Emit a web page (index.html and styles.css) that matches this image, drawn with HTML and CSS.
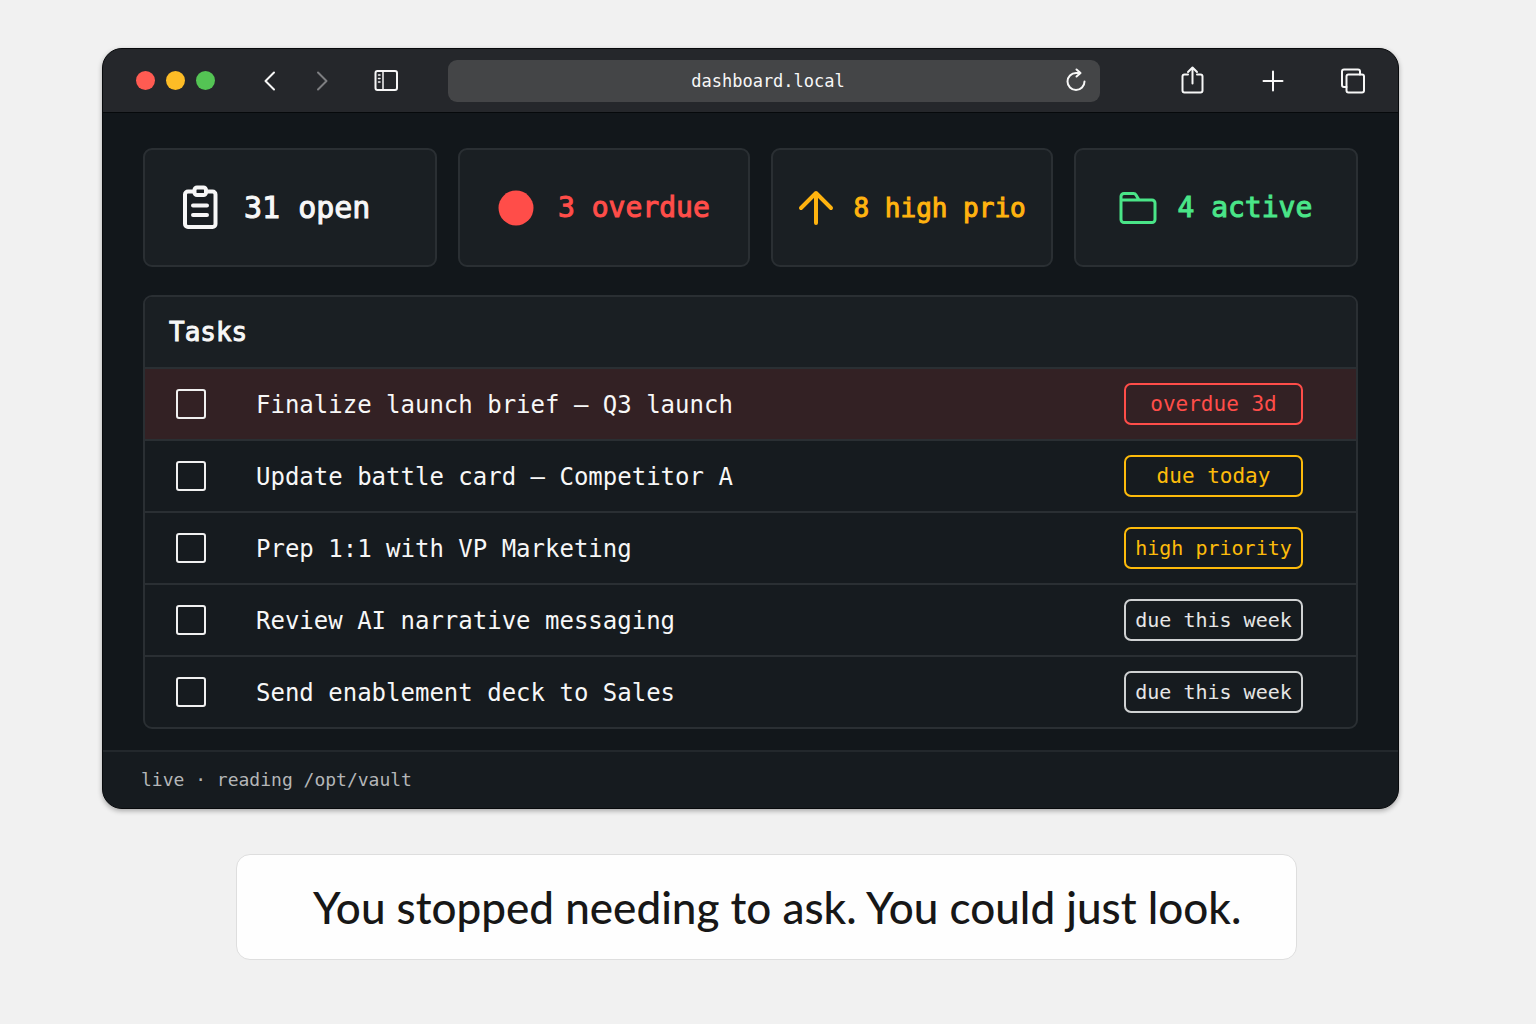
FILE: index.html
```html
<!DOCTYPE html>
<html lang="en">
<head>
    <meta charset="UTF-8">
    <title>Dashboard</title>
    <link rel="stylesheet" href="styles.css">
</head>
<body>
    <main class="window">
        <header class="titlebar">
            <div class="lights">
                <span class="light red"></span>
                <span class="light yellow"></span>
                <span class="light green"></span>
            </div>
            <nav class="nav-buttons">
                <button type="button" aria-label="Back">
                    <svg width="32" height="32" viewBox="0 0 32 32"><path d="M20 7.500L11.500 16L20 24.500"/></svg>
                </button>
                <button type="button" class="dim" aria-label="Forward">
                    <svg width="32" height="32" viewBox="0 0 32 32"><path d="M12 7.500L20.500 16L12 24.500"/></svg>
                </button>
            </nav>
            <button type="button" class="sidebar-button" aria-label="Sidebar">
                <svg width="32" height="32" viewBox="0 0 32 32"><rect x="5.500" y="6" width="21.500" height="19" rx="2"/><path d="M13 6v19M8.500 10h1.500M8.500 13.500h1.500M8.500 17h1.500" stroke-width="1.500"/></svg>
            </button>
            <div class="address">
                <input type="text" value="dashboard.local" aria-label="Address">
                <button type="button" aria-label="Reload">
                    <svg width="32" height="32" viewBox="0 0 32 32"><path d="M23.500 16.500a8.500 8.500 0 1 1-8.500-8.500h4M15.500 4.500L19.500 8L15.500 11.500"/></svg>
                </button>
            </div>
            <div class="actions">
                <button type="button" aria-label="Share">
                    <svg width="32" height="32" viewBox="0 0 32 32"><path d="M11 9.500H7.500a2 2 0 0 0-2 2V25.500a2 2 0 0 0 2 2h16a2 2 0 0 0 2-2V11.500a2 2 0 0 0-2-2H20M15.500 18.500V3M11 7L15.500 2.500L20 7"/></svg>
                </button>
                <button type="button" aria-label="New tab">
                    <svg width="32" height="32" viewBox="0 0 32 32"><path d="M16 6.500v19M6.500 16h19"/></svg>
                </button>
                <button type="button" aria-label="Show tabs">
                    <svg width="32" height="32" viewBox="0 0 32 32"><rect x="9.500" y="9.500" width="17.500" height="18" rx="2"/><path d="M9.500 22H7a2 2 0 0 1-2-2V6.500a2 2 0 0 1 2-2h14a2 2 0 0 1 2 2v3"/></svg>
                </button>
            </div>
        </header>

        <section class="content">
            <div class="stats">
                <div class="stat open">
                    <svg width="36" height="46" viewBox="0 0 36 46"><rect x="3" y="6.500" width="30.500" height="35.500" rx="3"/><rect x="12.500" y="2.500" width="11.500" height="7.500" rx="2.500" fill="#1a1f23"/><path d="M11 20.500h14M11 30h14"/></svg>
                    <span>31 open</span>
                </div>
                <div class="stat overdue">
                    <svg width="36" height="36" viewBox="0 0 36 36"><circle cx="18" cy="18" r="17.500" fill="currentColor" stroke="none"/></svg>
                    <span>3 overdue</span>
                </div>
                <div class="stat high">
                    <svg width="36" height="36" viewBox="0 0 36 36"><path d="M18 33V3M3 18L18 3L33 18"/></svg>
                    <span>8 high prio</span>
                </div>
                <div class="stat active">
                    <svg width="38" height="36" viewBox="0 0 38 36"><path d="M2 29.500V6.500a3 3 0 0 1 3-3h9.500a3 3 0 0 1 2.500 1.500L20 10h13a3 3 0 0 1 3 3v16.500a3 3 0 0 1-3 3H5a3 3 0 0 1-3-3zM2 10h18"/></svg>
                    <span>4 active</span>
                </div>
            </div>

            <div class="tasks">
                <h2>Tasks</h2>
                <ul>
                    <li class="late">
                        <input type="checkbox" id="task1">
                        <label for="task1">Finalize launch brief — Q3 launch</label>
                        <span class="badge red">overdue 3d</span>
                    </li>
                    <li>
                        <input type="checkbox" id="task2">
                        <label for="task2">Update battle card — Competitor A</label>
                        <span class="badge yellow">due today</span>
                    </li>
                    <li>
                        <input type="checkbox" id="task3">
                        <label for="task3">Prep 1:1 with VP Marketing</label>
                        <span class="badge yellow long">high priority</span>
                    </li>
                    <li>
                        <input type="checkbox" id="task4">
                        <label for="task4">Review AI narrative messaging</label>
                        <span class="badge long">due this week</span>
                    </li>
                    <li>
                        <input type="checkbox" id="task5">
                        <label for="task5">Send enablement deck to Sales</label>
                        <span class="badge long">due this week</span>
                    </li>
                </ul>
            </div>
        </section>

        <footer class="status">live · reading /opt/vault</footer>
    </main>

    <p class="caption">You stopped needing to ask. You could just look.</p>
</body>
</html>
```
FILE: styles.css
```css
* {
    box-sizing: border-box;
}

body {
    margin: 0;
    padding: 48px 137px 64px 102px;
    background-color: #f1f1f1;
    font-family: "DejaVu Sans Mono", monospace;
    color: #f7f7f7;
}

svg {
    display: block;
    flex: none;
    fill: none;
    stroke: currentColor;
    stroke-width: 2;
    stroke-linecap: round;
    stroke-linejoin: round;
}

button {
    padding: 0;
    border: none;
    background: none;
    color: #f7f7f7;
    cursor: pointer;
}

/* Browser window */
.window {
    border: 1px solid #080a0c;
    border-radius: 20px;
    background-color: #12171b;
    overflow: hidden;
    box-shadow: 0 2px 5px rgba(0, 0, 0, 0.3);
}

.titlebar {
    display: flex;
    align-items: center;
    height: 64px;
    padding: 0 29px 0 33px;
    background-color: #25272b;
    border-bottom: 1px solid #06090b;
}

.lights {
    display: flex;
    gap: 11px;
}

.light {
    width: 19px;
    height: 19px;
    border-radius: 50%;
}

.light.red {
    background-color: #ff5b52;
}

.light.yellow {
    background-color: #fdbc26;
}

.light.green {
    background-color: #54c454;
}

.nav-buttons {
    display: flex;
    gap: 20px;
    margin-left: 39px;
}

.dim {
    color: #7d7e81;
}

.sidebar-button {
    margin-left: 32px;
}

.address {
    display: flex;
    flex: 1;
    align-items: center;
    height: 42px;
    margin: 0 77px 0 46px;
    padding: 0 7px 0 27px;
    border-radius: 9px;
    background-color: #444547;
}

.address input {
    flex: 1;
    min-width: 0;
    border: none;
    background: none;
    color: #f7f7f7;
    font-family: inherit;
    font-size: 17px;
    text-align: center;
}

.actions {
    display: flex;
    gap: 48px;
}

.content {
    padding: 35px 40px 21px;
}

/* Stat cards */
.stats {
    display: grid;
    grid-template-columns: 294fr 291fr 282fr 284fr;
    gap: 21px;
    margin-bottom: 28px;
}

.stat {
    display: flex;
    align-items: center;
    justify-content: center;
    gap: 24px;
    height: 119px;
    border: 2px solid #2a2f33;
    border-radius: 9px;
    background-color: #1a1f23;
    font-size: 28px;
    white-space: nowrap;
}

.stat span,
.tasks h2 {
    -webkit-text-stroke: 1px currentColor;
}

.stat svg {
    stroke-width: 4;
}

.stat.open {
    justify-content: flex-start;
    gap: 26px;
    padding-left: 37px;
    font-size: 30px;
}

.stat.overdue {
    color: #ff4d49;
}

.stat.high {
    gap: 20px;
    color: #ffb30f;
    font-size: 26px;
}

.stat.active {
    gap: 20px;
    color: #4ae588;
}

.stat.active svg {
    stroke-width: 3;
}

/* Task list */
.tasks {
    border: 2px solid #2a2f33;
    border-radius: 9px;
    background-color: #161b1f;
    overflow: hidden;
}

.tasks h2 {
    margin: 0;
    padding: 0 24px;
    background-color: #1a1f23;
    font-size: 26px;
    font-weight: normal;
    line-height: 70px;
}

.tasks ul {
    margin: 0;
    padding: 0;
    list-style: none;
}

.tasks li {
    display: flex;
    align-items: center;
    height: 72px;
    padding: 0 53px 0 31px;
    border-top: 2px solid #2a2f33;
}

.tasks li.late {
    background-color: #332124;
}

.tasks input {
    appearance: none;
    width: 30px;
    height: 30px;
    margin: 0 50px 0 0;
    border: 2px solid #f0f0f0;
    border-radius: 3px;
}

.tasks input:checked {
    background-color: #4ae588;
}

.tasks label {
    flex: 1;
    padding-top: 2px;
    font-size: 24px;
}

.badge {
    width: 179px;
    border: 2px solid #cfd1d2;
    border-radius: 7px;
    color: #e6e6e6;
    font-size: 21px;
    line-height: 38px;
    text-align: center;
    white-space: nowrap;
}

.badge.long {
    font-size: 20px;
}

.badge.red {
    border-color: #ff4d49;
    color: #ff4d49;
}

.badge.yellow {
    border-color: #fdbb0b;
    color: #fdbb0b;
}

.status {
    padding: 0 38px;
    border-top: 2px solid #23282c;
    background-color: #161b1f;
    color: #b4b6b8;
    font-size: 18px;
    line-height: 56px;
}

/* Note under the window */
.caption {
    margin: 45px 102px 0 134px;
    padding: 0 40px 0 76px;
    border: 1px solid #dedede;
    border-radius: 14px;
    background-color: #fefefe;
    color: #171717;
    font-family: "Lato", sans-serif;
    font-size: 44px;
    font-weight: 500;
    line-height: 104px;
}
```
